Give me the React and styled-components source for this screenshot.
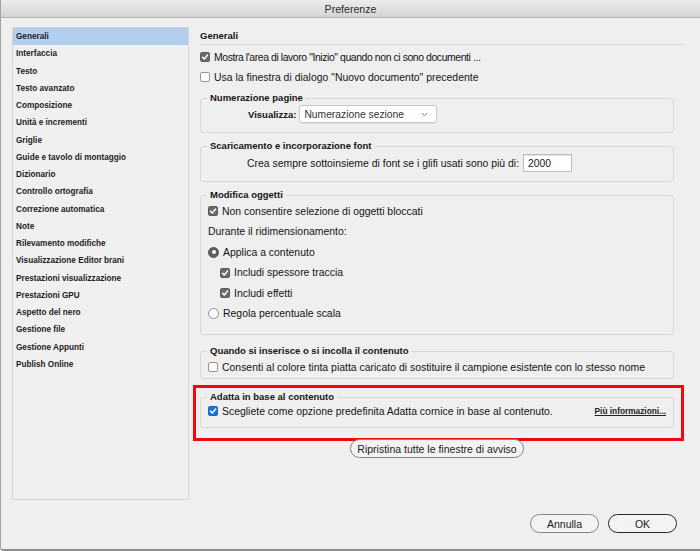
import React from 'react';
import styled, { createGlobalStyle } from 'styled-components';

const GlobalStyle = createGlobalStyle`
  html, body {
    margin: 0;
    padding: 0;
    background: #ffffff;
  }
  body {
    font-family: "Liberation Sans", Arial, sans-serif;
    -webkit-font-smoothing: antialiased;
  }
`;

const Window = styled.div`
  width: 700px;
  height: 551px;
  box-sizing: border-box;
  background: #efefef;
  border-left: 1px solid #a3a3a3;
  border-bottom: 2px solid #8c8c8c;
  border-bottom-left-radius: 4px;
  display: flex;
  flex-direction: column;
  overflow: hidden;
  color: #151515;
`;

const TitleBar = styled.div`
  height: 17px;
  flex: none;
  background: linear-gradient(#ececec, #d4d4d4);
  border-bottom: 1px solid #b2b2b2;
  display: flex;
  align-items: center;
  justify-content: center;
  font-size: 10.6px;
  color: #2c2c2c;
`;

const Body = styled.div`
  display: flex;
  align-items: flex-start;
  gap: 11px;
  padding: 9px 0 0 11px;
`;

const Sidebar = styled.ul`
  list-style: none;
  margin: 0;
  padding: 0;
  width: 177px;
  height: 473px;
  box-sizing: border-box;
  flex: none;
  background: #f0f0f0;
  border: 1px solid #d6d6d6;
`;

const SideItem = styled.li`
  height: 17.25px;
  line-height: 17.25px;
  padding-left: 3px;
  font-size: 8.2px;
  font-weight: bold;
  color: #1c1c1c;
  background: ${({ $active }) => ($active ? '#b3cfef' : 'transparent')};
  white-space: nowrap;
`;

const Main = styled.div`
  flex: 1;
  display: flex;
  flex-direction: column;
  min-width: 0;
  padding-right: 16px;
`;

const PanelTitle = styled.div`
  height: 17px;
  line-height: 17px;
  font-size: 9.5px;
  font-weight: bold;
  border-bottom: 1px solid #d8d8d8;
`;

const Options = styled.div`
  padding-top: 2px;
`;

const Row = styled.div`
  display: flex;
  align-items: center;
  gap: ${({ $gap }) => $gap ?? 4}px;
  height: ${({ $h }) => $h ?? 20}px;
  padding-left: ${({ $indent }) => $indent ?? 0}px;
  font-size: 10.45px;
  letter-spacing: ${({ $tight }) => ($tight ? '-0.42px' : 'normal')};
  white-space: nowrap;
`;

const Group = styled.fieldset`
  margin: ${({ $mt }) => $mt ?? 7}px ${({ $mr }) => $mr ?? 10}px 0 0;
  padding: 0;
  border: 1px solid #d8d8d8;
  border-radius: 3px;
  min-width: 0;
`;

const Legend = styled.legend`
  margin-left: 6px;
  padding: 0 3px;
  font-size: 9.5px;
  font-weight: bold;
  line-height: 12px;
  color: #151515;
`;

const GroupBody = styled.div`
  padding: ${({ $pt }) => $pt ?? 0}px 7px ${({ $pb }) => $pb ?? 9}px 7px;
`;

const Bold = styled.span`
  font-weight: bold;
  font-size: 9.5px;
`;

const Box = styled.span`
  width: 10px;
  height: 10px;
  box-sizing: border-box;
  flex: none;
  border-radius: 2px;
  display: inline-flex;
  align-items: center;
  justify-content: center;
  background: ${({ $on, $blue }) => ($on ? ($blue ? '#1e73e3' : '#6a6a6a') : '#ffffff')};
  border: 1px solid ${({ $on, $blue }) => ($on ? ($blue ? '#1a66cc' : '#5c5c5c') : '#959595')};
`;

const Radio = styled.span`
  width: 11px;
  height: 11px;
  box-sizing: border-box;
  flex: none;
  border-radius: 50%;
  display: inline-flex;
  align-items: center;
  justify-content: center;
  background: ${({ $on }) => ($on ? '#5f5f5f' : '#ffffff')};
  border: 1px solid ${({ $on }) => ($on ? '#555555' : '#8f8f8f')};

  &::after {
    content: '';
    width: 4px;
    height: 4px;
    border-radius: 50%;
    background: #ffffff;
    display: ${({ $on }) => ($on ? 'block' : 'none')};
  }
`;

const Select = styled.div`
  width: 138px;
  height: 18px;
  box-sizing: border-box;
  background: #ffffff;
  border: 1px solid #c6c6c6;
  border-radius: 3px;
  box-shadow: 0 1px 1px rgba(0, 0, 0, 0.06);
  display: flex;
  align-items: center;
  justify-content: space-between;
  padding: 0 8px 0 4px;
  font-size: 10.3px;
  color: #333;
`;

const Input = styled.div`
  width: 49px;
  height: 18px;
  box-sizing: border-box;
  background: #ffffff;
  border: 1px solid #bdbdbd;
  box-shadow: inset 0 1px 1px rgba(0, 0, 0, 0.12);
  display: flex;
  align-items: center;
  padding-left: 4px;
  font-size: 10.3px;
`;

const Highlight = styled.div`
  margin: 6px 0 0 -7px;
  border: 3px solid #ee0a0a;
  padding: 3px 0 10px 4px;
`;

const MoreLink = styled.span`
  margin-left: auto;
  font-size: 8.3px;
  font-weight: bold;
  letter-spacing: normal;
  text-decoration: underline;
  text-underline-offset: 1px;
  color: #222;
`;

const PillButton = styled.button`
  font-family: inherit;
  font-size: 10.5px;
  color: #1a1a1a;
  height: ${({ $h }) => $h ?? 19}px;
  width: ${({ $w }) => $w}px;
  padding: 0;
  border-radius: 10px;
  background: #f3f3f3;
  border: ${({ $primary }) => ($primary ? '1.5px solid #2a2a2a' : '1px solid #858585')};
  box-sizing: border-box;
`;

const ResetButton = styled(PillButton)`
  align-self: center;
  margin-top: -2px;
  margin-right: 10px;
`;

const Footer = styled.div`
  display: flex;
  justify-content: flex-end;
  gap: 9px;
  padding-right: 23px;
  margin-top: 14px;
`;

const Check = ({ on, blue }) => (
  <Box $on={on} $blue={blue}>
    {on && (
      <svg width="8" height="8" viewBox="0 0 8 8">
        <path d="M1.5 4.2 L3.3 6 L6.6 2" fill="none" stroke="#fff" strokeWidth="1.5" strokeLinecap="round" strokeLinejoin="round" />
      </svg>
    )}
  </Box>
);

const Chevron = () => (
  <svg width="7" height="5" viewBox="0 0 7 5">
    <path d="M1 1.2 L3.5 3.6 L6 1.2" fill="none" stroke="#7a7a7a" strokeWidth="1" />
  </svg>
);

const sections = [
  'Generali',
  'Interfaccia',
  'Testo',
  'Testo avanzato',
  'Composizione',
  'Unità e incrementi',
  'Griglie',
  'Guide e tavolo di montaggio',
  'Dizionario',
  'Controllo ortografia',
  'Correzione automatica',
  'Note',
  'Rilevamento modifiche',
  'Visualizzazione Editor brani',
  'Prestazioni visualizzazione',
  'Prestazioni GPU',
  'Aspetto del nero',
  'Gestione file',
  'Gestione Appunti',
  'Publish Online',
];

export default function App() {
  return (
    <>
      <GlobalStyle />
      <Window>
        <TitleBar>Preferenze</TitleBar>
        <Body>
          <Sidebar>
            {sections.map((s, i) => (
              <SideItem key={s} $active={i === 0}>{s}</SideItem>
            ))}
          </Sidebar>
          <Main>
            <PanelTitle>Generali</PanelTitle>
            <Options>
              <Row $tight>
                <Check on />
                Mostra l'area di lavoro "Inizio" quando non ci sono documenti ...
              </Row>
              <Row>
                <Check />
                Usa la finestra di dialogo "Nuovo documento" precedente
              </Row>
            </Options>

            <Group $mt={5}>
              <Legend>Numerazione pagine</Legend>
              <GroupBody $pt={1}>
                <Row $h={18} $indent={40} $gap={3}>
                  <Bold>Visualizza:</Bold>
                  <Select>
                    Numerazione sezione
                    <Chevron />
                  </Select>
                </Row>
              </GroupBody>
            </Group>

            <Group>
              <Legend>Scaricamento e incorporazione font</Legend>
              <GroupBody $pt={2}>
                <Row $h={18} $indent={39} $gap={4}>
                  Crea sempre sottoinsieme di font se i glifi usati sono più di:
                  <Input>2000</Input>
                </Row>
              </GroupBody>
            </Group>

            <Group>
              <Legend>Modifica oggetti</Legend>
              <GroupBody $pb={10}>
                <Row $h={20.5}>
                  <Check on />
                  Non consentire selezione di oggetti bloccati
                </Row>
                <Row $h={20.5}>Durante il ridimensionamento:</Row>
                <Row $h={20.5}>
                  <Radio $on />
                  Applica a contenuto
                </Row>
                <Row $h={20.5} $indent={12}>
                  <Check on />
                  Includi spessore traccia
                </Row>
                <Row $h={20.5} $indent={12}>
                  <Check on />
                  Includi effetti
                </Row>
                <Row $h={20.5}>
                  <Radio />
                  Regola percentuale scala
                </Row>
              </GroupBody>
            </Group>

            <Group $mt={10}>
              <Legend>Quando si inserisce o si incolla il contenuto</Legend>
              <GroupBody $pb={1}>
                <Row>
                  <Check />
                  Consenti al colore tinta piatta caricato di sostituire il campione esistente con lo stesso nome
                </Row>
              </GroupBody>
            </Group>

            <Highlight>
              <Group $mt={0} $mr={7}>
                <Legend>Adatta in base al contenuto</Legend>
                <GroupBody $pb={8}>
                  <Row $h={16}>
                    <Check on blue />
                    Scegliete come opzione predefinita Adatta cornice in base al contenuto.
                    <MoreLink>Più informazioni...</MoreLink>
                  </Row>
                </GroupBody>
              </Group>
            </Highlight>

            <ResetButton $w={174}>Ripristina tutte le finestre di avviso</ResetButton>
          </Main>
        </Body>
        <Footer>
          <PillButton $w={69}>Annulla</PillButton>
          <PillButton $w={69} $primary>OK</PillButton>
        </Footer>
      </Window>
    </>
  );
}
